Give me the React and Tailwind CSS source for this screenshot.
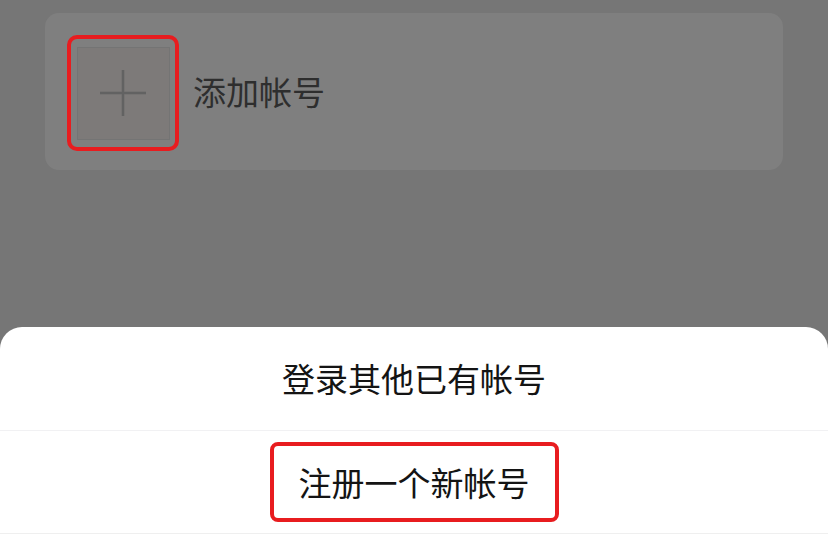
import React from "react";

const font = { fontFamily: '"Noto Sans CJK SC", "Noto Sans", sans-serif' };

const AddAccountCard = () => {
  return (
    <div className="mx-[45px] mt-[13px] h-[157px] rounded-[14px] bg-[#7f7f7f] flex items-center pl-[22px] pt-[3px]">
      <div className="w-[112px] h-[116px] border-[4px] border-[#e81c1f] rounded-[10px] flex items-center justify-center">
        <div className="w-[93px] h-[93px] border border-[#747474] bg-[#7d7a79] flex items-center justify-center">
          <svg width="46" height="46" viewBox="0 0 46 46">
            <path d="M0 23H46M23 0V46" stroke="#626262" strokeWidth="2.5" />
          </svg>
        </div>
      </div>
      <span className="ml-[14px] text-[33px] leading-none text-[#2e2e2e] -mt-[4px]">添加帐号</span>
    </div>
  );
};

const BottomSheet = () => {
  return (
    <div className="mt-auto h-[210px] bg-white rounded-t-[22px] flex flex-col">
      <div className="h-[104px] flex items-center justify-center border-b border-[#f1f1f3]">
        <span className="text-[33px] leading-none text-[#141414]">登录其他已有帐号</span>
      </div>
      <div className="h-[103px] flex items-center justify-center border-b border-[#efefef]">
        <div className="w-[289px] h-[80px] border-[4px] border-[#e81c1f] rounded-[8px] flex items-center justify-center">
          <span className="text-[33px] leading-none text-[#141414]">注册一个新帐号</span>
        </div>
      </div>
    </div>
  );
};

export default function App() {
  return (
    <div className="w-[828px] h-[537px] bg-[#767676] flex flex-col overflow-hidden" style={font}>
      <AddAccountCard />
      <BottomSheet />
    </div>
  );
}
